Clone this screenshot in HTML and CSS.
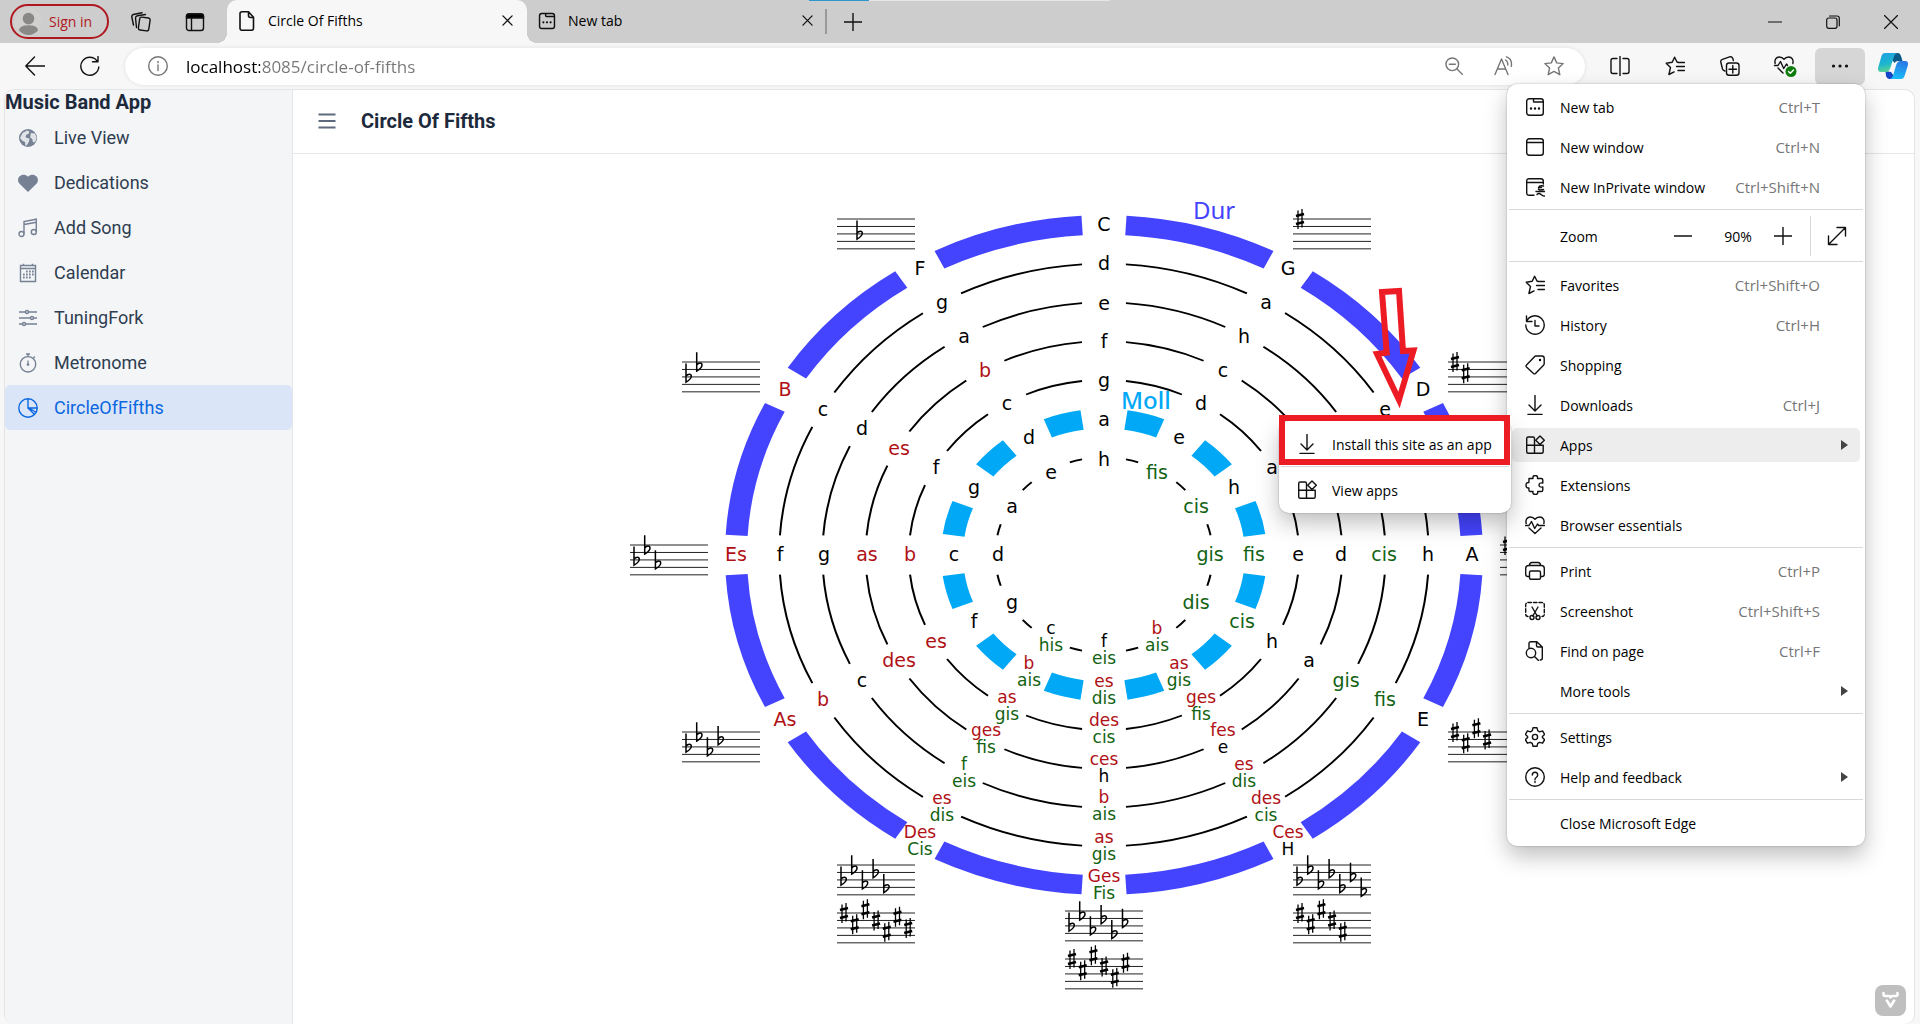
FILE: index.html
```html
<!DOCTYPE html>
<html lang="en">
<head>
<meta charset="utf-8">
<title>Circle Of Fifths</title>
<link rel="stylesheet" href="styles.css">
</head>
<body>
<svg class="sprite" aria-hidden="true">
  <symbol id="i-newtab" viewBox="0 0 20 20"><rect x="1.700" y="1.700" width="16.600" height="16.600" rx="2.500"/><path d="M8.500 2v2.200q0 .8.800.800H18"/><path class="dots" d="M6 11.500h.01M10 11.500h.01M14 11.500h.01"/></symbol>
  <symbol id="i-star-list" viewBox="0 0 20 20"><path d="M13 6.300 12 6 9.600 1.200 7.200 6.300l-6 .9 4.300 4.300-1.600 7 5.200-2.600"/><path d="M13 6.500h6.500M11.500 10.500h8M13 14.500h6.500"/></symbol>
  <symbol id="i-heart" viewBox="0 0 20 20"><path d="M1.200 8.500C.2 5 2.200 2 5.200 2 7.500 2 9 3 10 4.300 11 3 12.500 2 14.800 2c3 0 5 3 4 6.500"/><path d="M.500 10.500H4l2.500-4 3.200 7 2.800-4.500 1.200 1.500h5.800M4 13l6 5.500 6-5.500"/></symbol>
  <symbol id="i-apps" viewBox="0 0 20 20"><path d="M10 18.300H3.200q-1.500 0-1.500-1.500V3.500Q1.700 2 3.200 2H8q1.500 0 1.500 1.500v14.800M1.700 10.200h16.500v6.600q0 1.500-1.500 1.500H9.500"/><path d="m15 1 4.300 4.300L15 9.500l-4.300-4.200z"/></symbol>
  <symbol id="i-down" viewBox="0 0 20 20"><path d="M10 .500v15M4 10l6 6 6-6M3 19.500h14"/></symbol>
  <symbol id="i-close" viewBox="0 0 12 12"><path d="m1 1 10 10M11 1 1 11"/></symbol>
</svg>

<header class="browser">
  <div class="tabstrip">
    <button class="signin"><svg class="avatar" viewBox="0 0 28 28"><circle cx="14" cy="14" r="14" fill="#d2d0ce"/><circle cx="14" cy="11" r="6" fill="#8a8886"/><path d="M4 23q1-5 10-5t10 5q-4 5-10 5T4 23z" fill="#8a8886"/></svg>Sign in</button>
    <button class="strip-btn" aria-label="Workspaces"><svg class="ic ic-lg" viewBox="0 0 20 20"><rect x="8" y="5.500" width="10.500" height="13" rx="2" transform="rotate(8 13 12)"/><path d="M5.500 15.500 4.500 6q0-2 2-2.300l8-1.200M2.500 13 .8 5q-.2-2 1.500-2.500L11 .8"/></svg></button>
    <button class="strip-btn" aria-label="Vertical tabs"><svg class="ic ic-lg" viewBox="0 0 20 20"><rect x="1.500" y="2" width="17" height="16.500" rx="2.500"/><path d="M1.500 6V4.500Q1.500 2 4 2h12q2.500 0 2.500 2.500V6z" fill="#000"/><path d="M6.500 6v12"/></svg></button>
    <div class="tab tab-active"><svg class="ic tab-ic" viewBox="0 0 18 20"><path d="M4 .8h6.500l5 5.500v11q0 2-2 2H4q-2 0-2-2V2.800q0-2 2-2zM10.500 1v3.500q0 2 2 2h3"/></svg><span class="tab-title">Circle Of Fifths</span><button class="tab-close" aria-label="Close tab"><svg class="ic ic-x"><use href="#i-close"/></svg></button></div>
    <div class="tab tab-idle"><svg class="ic tab-ic"><use href="#i-newtab"/></svg><span class="tab-title">New tab</span><button class="tab-close" aria-label="Close tab"><svg class="ic ic-x"><use href="#i-close"/></svg></button></div>
    <button class="strip-btn" aria-label="New tab"><svg class="ic" viewBox="0 0 18 18"><path d="M9 0v18M0 9h18"/></svg></button>
    <div class="window-btns">
      <button aria-label="Minimize"><svg class="ic ic-win" viewBox="0 0 14 14"><path d="M.5 7h13"/></svg></button>
      <button aria-label="Restore"><svg class="ic ic-win" viewBox="0 0 14 14"><rect x=".7" y="3" width="10.300" height="10.300" rx="2"/><path d="M3.500 1H11q2.300 0 2.300 2.300v7.500"/></svg></button>
      <button aria-label="Close"><svg class="ic ic-win" viewBox="0 0 14 14"><path d="m.5.5 13 13M13.500.5l-13 13"/></svg></button>
    </div>
    <div class="top-edge"></div>
  </div>

  <div class="toolbar">
    <button class="tool" aria-label="Back"><svg class="ic ic-lg" viewBox="0 0 20 20"><path d="M20 10H.8M9.500 1 .8 10l8.700 9"/></svg></button>
    <button class="tool" aria-label="Refresh"><svg class="ic ic-lg" viewBox="0 0 20 20"><path d="M18.800 11A9 9 0 1 1 17 4.800M18 .500v5.200h-5.500"/></svg></button>
    <div class="address">
      <svg class="ic ic-lg ic-gray" viewBox="0 0 20 20"><circle cx="10" cy="10" r="9.300"/><path d="M10 9v5.500M10 5.500v1.300"/></svg>
      <input class="url" type="text" aria-label="Address" value="localhost:8085/circle-of-fifths">
      <button class="tool" aria-label="Zoom out"><svg class="ic ic-gray" viewBox="0 0 18 18"><circle cx="7.300" cy="7.300" r="6.300"/><path d="m12 12 5.500 5.500M4.300 7.300h6"/></svg></button>
      <button class="tool" aria-label="Read aloud"><svg class="ic ic-lg ic-gray" viewBox="0 0 20 20"><path d="M1 18.500 7.500 3 14 18.500M3.300 13h8.400M11.500 4q2.500 1.300 2.300 5M12.500.800q6 2 4.800 9.500" /></svg></button>
      <button class="tool" aria-label="Favorite"><svg class="ic ic-lg ic-gray" viewBox="0 0 20 20"><path d="m10 .900 2.700 6 6.500.700-4.800 4.400 1.400 6.700L10 15.400l-5.800 3.300 1.400-6.700L.8 7.600l6.500-.7z"/></svg></button>
    </div>
    <button class="tool" aria-label="Split screen"><svg class="ic ic-lg" viewBox="0 0 20 20"><path d="M10 0v20M7 2.500H3q-2 0-2 2v11q0 2 2 2h4M13 2.500h4q2 0 2 2v11q0 2-2 2h-4"/></svg></button>
    <button class="tool" aria-label="Favorites"><svg class="ic ic-lg"><use href="#i-star-list"/></svg></button>
    <button class="tool" aria-label="Collections"><svg class="ic ic-lg" viewBox="0 0 20 20"><rect x="6.500" y="7" width="12.500" height="12.300" rx="2.500"/><path d="M12.800 9.500v7.500M9 13.200h7.500M5 15Q3 14.500 2.500 13L.800 6Q.400 4 2.500 3.300l7-2.400q2.500-.8 3.300 1.600l.6 2"/></svg></button>
    <button class="tool" aria-label="Browser essentials"><svg class="ic ic-xl" viewBox="0 0 24 24"><g transform="translate(1 1)"><path d="M1.200 8.500C.2 5 2.200 2 5.200 2 7.500 2 9 3 10 4.300 11 3 12.500 2 14.800 2c3 0 5 3 4 6.500"/><path d="M.500 10.500H4l2.500-4 3.200 7 2.800-4.500 1 1.500M4 13l5 5"/></g><circle cx="18" cy="17.500" r="5.500" fill="#107c10" stroke="none"/><path d="m15.500 17.500 1.800 1.800 3.200-3.400" stroke="#fff"/></svg></button>
    <button class="tool tool-open" aria-label="Settings and more"><svg class="ic ic-lg" viewBox="0 0 20 20"><path class="dots-lg" d="M3.500 10h.01M10 10h.01M16.500 10h.01"/></svg></button>
    <button class="tool tool-copilot" aria-label="Copilot"><svg class="copilot" viewBox="0 0 30 28">
      <defs><linearGradient id="cg1" x1=".3" y1="0" x2=".5" y2="1"><stop offset="0" stop-color="#1fa3e0"/><stop offset=".55" stop-color="#1cb5d0"/><stop offset="1" stop-color="#5fd58c"/></linearGradient><linearGradient id="cg2" x1=".6" y1="0" x2=".3" y2="1"><stop offset="0" stop-color="#2a78e4"/><stop offset="1" stop-color="#18c0fa"/></linearGradient></defs>
      <path d="M16 1h4q2 0 3 3l1.500 5H20q-2.500 0-3.300 2L14 8z" fill="#0a5a88"/>
      <path d="M7.500 19 13 20l3 4-2 3h-3q-2 0-3-3z" fill="#1545c8"/>
      <path d="M7 1h13q-3 0-4 3.500l-3.500 11Q11 20 7.500 20H3q-4 0-2.700-5L3.500 4Q4.500 1 7 1z" fill="url(#cg1)"/>
      <path d="M23 27H11q3 0 4-3.500l3.200-10.500Q19.500 9 22.500 9H27q4 0 2.700 5L26.500 24q-1 3-3.500 3z" fill="url(#cg2)"/></svg></button>
  </div>
</header>

<div class="app">
  <aside class="sidebar">
    <h1 class="app-name">Music Band App</h1>
    <nav class="nav">
      <a href="#"><svg class="nav-ic" viewBox="0 0 20 20"><circle cx="10" cy="10" r="9" fill="currentColor"/><path d="M4.500 5 9 2.500l2.500 1-1 2.500-2 .5-1 2.500 1.500 1 2.500.5-.5 3L9 17l-1.500 1-.5-4-3-1.500L2 10zM13 5l4 .5 1.500 4-1 4-2.500 1-.8-3.500-2-1.500.3-2.500z" fill="#f3f5f7" opacity=".85"/></svg>Live View</a>
      <a href="#"><svg class="nav-ic" viewBox="0 0 20 20"><path d="M10 19 1.300 10.500C-3 5 4.500-1.500 10 3.800 15.500-1.500 23 5 18.700 10.500z" fill="currentColor"/></svg>Dedications</a>
      <a href="#"><svg class="nav-ic line" viewBox="0 0 20 20"><path d="M6 16V3.500L18.300 1.200V14M6 6.500l12.300-2.300"/><circle cx="3.500" cy="16" r="2.500"/><circle cx="15.800" cy="14" r="2.500"/></svg>Add Song</a>
      <a href="#"><svg class="nav-ic line" viewBox="0 0 20 20"><path d="M2.500 2.500h15v16h-15zM2.500 5.500h15M5.500.8v2M14.500.8v2"/><path d="M8 8.500h8M5 11.500h11M5 14.500h8" stroke-width="1.800" stroke-dasharray="1.700 1.300"/></svg>Calendar</a>
      <a href="#"><svg class="nav-ic line" viewBox="0 0 20 20"><path d="M1 4h6.500M10.500 4H19M1 10h11.500M15.500 10H19M1 16h3.500M7.500 16H19"/><circle cx="9" cy="4" r="1.500"/><circle cx="14" cy="10" r="1.500"/><circle cx="6" cy="16" r="1.500"/></svg>TuningFork</a>
      <a href="#"><svg class="nav-ic line" viewBox="0 0 20 20"><circle cx="10" cy="11.300" r="7.700"/><path d="M8 1h4M10 1v2.500M15.500 5l1.300-1.400"/><path d="M10 7.500v3.500" stroke-width="1.200"/><circle cx="10" cy="11.600" r="1.300" fill="currentColor" stroke="none"/></svg>Metronome</a>
      <a href="#" class="current" aria-current="page"><svg class="nav-ic line" viewBox="0 0 20 20"><circle cx="10" cy="10" r="9.200"/><path d="M10 1v9h9.200M10 10l6.500 6.500M10 10l4.500 2 3.500 2.500"/></svg>CircleOfFifths</a>
    </nav>
  </aside>
  <main class="main">
    <div class="view-head">
      <button class="toggle" aria-label="Menu toggle"><svg class="ic ic-lg" viewBox="0 0 20 20"><path d="M1.500 3.500h17M1.500 10h17M1.500 16.500h17"/></svg></button>
      <h2>Circle Of Fifths</h2>
    </div>
    <svg class="circle" viewBox="0 0 960 860" id="circle">
      <g class="rings" transform="translate(480 401) scale(1 .897)">
        <circle class="ring-major" r="368" pathLength="360" stroke-dasharray="23.14 6.86" stroke-dashoffset="-3.43"/>
        <circle r="324.800" pathLength="360" stroke-dasharray="22.23 7.77" stroke-dashoffset="-3.88"/>
        <circle r="281.600" pathLength="360" stroke-dasharray="21.04 8.96" stroke-dashoffset="-4.48"/>
        <circle r="238.400" pathLength="360" stroke-dasharray="19.41 10.59" stroke-dashoffset="-5.29"/>
        <circle r="195.200" pathLength="360" stroke-dasharray="17.06 12.94" stroke-dashoffset="-6.47"/>
        <circle class="ring-minor" r="152" pathLength="360" stroke-dasharray="13.36 16.64" stroke-dashoffset="-8.32"/>
        <circle r="108.800" pathLength="360" stroke-dasharray="6.67 23.33" stroke-dashoffset="-11.67"/>
      </g>
      <text class="mode major" x="569" y="65">Dur</text>
      <text class="mode minor" x="497" y="255">Moll</text>
    </svg>
  </main>
  <button class="dev-badge" aria-label="Vaadin development tools"><svg viewBox="0 0 31 31"><path d="M8.500 8v1.500q0 1.500 1.500 1.500h3.500q2 0 2 1.500 0-1.500 2-1.500H21q1.500 0 1.500-1.500V8M11.800 15.500l3.700 6 3.700-6" fill="none" stroke="#fff" stroke-width="2.600" stroke-linecap="round" stroke-linejoin="round"/></svg></button>
</div>

<div class="menu" role="menu">
  <button role="menuitem"><svg class="ic ic-lg"><use href="#i-newtab"/></svg><span>New tab</span><kbd>Ctrl+T</kbd></button>
  <button role="menuitem"><svg class="ic ic-lg" viewBox="0 0 20 20"><rect x="1.700" y="1.700" width="16.600" height="16.600" rx="2.500"/><path d="M1.700 5.500h16.600"/></svg><span>New window</span><kbd>Ctrl+N</kbd></button>
  <button role="menuitem"><svg class="ic ic-lg" viewBox="0 0 20 20"><path d="M9 18.300H4.200q-2.500 0-2.500-2.500V4.200q0-2.500 2.500-2.500h11.600q2.500 0 2.500 2.500V7M1.700 5.500h16.600M18.500 9q-4-1-5 1.500h3M18.500 12.500q-4 1-5-.5M11 14.500h9M12 17.500q2-2 4 0t4 1.500"/></svg><span>New InPrivate window</span><kbd>Ctrl+Shift+N</kbd></button>
  <hr>
  <div class="zoom-row"><span class="zoom-label">Zoom</span><button class="zoom-out" aria-label="Zoom out"><svg class="ic" viewBox="0 0 18 18"><path d="M0 9h18"/></svg></button><output>90%</output><button class="zoom-in" aria-label="Zoom in"><svg class="ic" viewBox="0 0 18 18"><path d="M9 0v18M0 9h18"/></svg></button><button class="full" aria-label="Full screen"><svg class="ic ic-lg" viewBox="0 0 20 20"><path d="M1.500 18.500 18.500 1.500M10 1.500h8.500V10M1.500 10v8.500H10"/></svg></button></div>
  <hr>
  <button role="menuitem"><svg class="ic ic-lg"><use href="#i-star-list"/></svg><span>Favorites</span><kbd>Ctrl+Shift+O</kbd></button>
  <button role="menuitem"><svg class="ic ic-lg" viewBox="0 0 20 20"><path d="M1.500 6.500A9.200 9.200 0 1 1 .800 10M1.500 1v5.500H7M10 5.500V11h4"/></svg><span>History</span><kbd>Ctrl+H</kbd></button>
  <button role="menuitem"><svg class="ic ic-lg" viewBox="0 0 20 20"><path d="M11 1h6q2.200 0 2.200 2.200V8.500q0 1-.7 1.700l-8 8.200q-1 1-2 0L1.500 12q-1-1 0-2l8-8.300Q10 1 11 1z"/><circle cx="15" cy="5" r="1.200" fill="#000" stroke="none"/></svg><span>Shopping</span></button>
  <button role="menuitem"><svg class="ic ic-lg"><use href="#i-down"/></svg><span>Downloads</span><kbd>Ctrl+J</kbd></button>
  <button role="menuitem" class="hover" aria-haspopup="true" aria-expanded="true"><svg class="ic ic-lg"><use href="#i-apps"/></svg><span>Apps</span><i class="arrow"></i></button>
  <button role="menuitem"><svg class="ic ic-lg" viewBox="0 0 20 20"><path d="M4 3.500h4q-.5-3 2.200-3t2.300 3h3.700q1.600 0 1.600 1.600V8q-3.800-.5-3.800 2t3.800 2v2.900q0 1.600-1.600 1.600h-3.500q.5 3-2.400 3t-2.300-3H5.500q-1.600 0-1.600-1.600V13Q1 13.300 1 10.200T3.900 7.500z"/></svg><span>Extensions</span></button>
  <button role="menuitem"><svg class="ic ic-lg"><use href="#i-heart"/></svg><span>Browser essentials</span></button>
  <hr>
  <button role="menuitem"><svg class="ic ic-lg" viewBox="0 0 20 20"><path d="M4 15.500H3q-2.300 0-2.300-2.300V7.500Q.7 4.500 3.700 4.500h12.600q3 0 3 3v5.700q0 2.300-2.300 2.300h-1M4.500 4.500q0-3 2.500-3h6q2.500 0 2.500 3"/><rect x="4.500" y="10" width="11" height="8.300" rx="1.500"/></svg><span>Print</span><kbd>Ctrl+P</kbd></button>
  <button role="menuitem"><svg class="ic ic-lg" viewBox="0 0 20 20"><path d="M3 15.500Q.7 15.500.7 13V4Q.7 1.500 3.200 1.500h13.600q2.500 0 2.500 2.500v9q0 2.500-2.300 2.500" stroke-dasharray="3.500 2"/><path d="m7 6 5.200 9M13 6l-5.200 9"/><circle cx="7" cy="16.500" r="2"/><circle cx="13" cy="16.500" r="2"/></svg><span>Screenshot</span><kbd>Ctrl+Shift+S</kbd></button>
  <button role="menuitem"><svg class="ic ic-lg" viewBox="0 0 20 20"><path d="M4 7V2.500Q4 .7 5.800.7h6L17.300 6v11q0 2-2 2M11.500 1v3.500Q11.500 6 13 6h4"/><circle cx="6" cy="12" r="4.700"/><path d="m9.500 15.500 4 4"/></svg><span>Find on page</span><kbd>Ctrl+F</kbd></button>
  <button role="menuitem" aria-haspopup="true"><svg class="ic ic-lg"></svg><span>More tools</span><i class="arrow"></i></button>
  <hr>
  <button role="menuitem"><svg class="ic ic-lg" viewBox="0 0 20 20"><path d="M8 .8h4l.7 2.900 1.900 1.100 3-.9 2 3.500-2.200 2.100v1.100l2.200 2.100-2 3.500-3-.9-1.900 1.100-.7 2.900H8l-.7-2.900-1.900-1.100-3 .9-2-3.500 2.200-2.100V9.500L.4 7.400l2-3.500 3 .9 1.900-1.100z"/><circle cx="10" cy="10" r="2.600"/></svg><span>Settings</span></button>
  <button role="menuitem" aria-haspopup="true"><svg class="ic ic-lg" viewBox="0 0 20 20"><circle cx="10" cy="10" r="9.300"/><path d="M7.300 8q0-2.800 2.700-2.800T12.700 8q0 1.500-1.500 2.500T10 12.700M10 14.500v1"/></svg><span>Help and feedback</span><i class="arrow"></i></button>
  <hr>
  <button role="menuitem"><svg class="ic ic-lg"></svg><span>Close Microsoft Edge</span></button>
</div>

<div class="submenu" role="menu">
  <button role="menuitem"><svg class="ic ic-lg"><use href="#i-down"/></svg><span>Install this site as an app</span></button>
  <hr>
  <button role="menuitem"><svg class="ic ic-lg"><use href="#i-apps"/></svg><span>View apps</span></button>
</div>
<div class="mark-box"></div>
<svg class="mark-arrow" viewBox="0 0 50 130"><path d="M12 10 29 9 33 69 43.500 68.500 29 118 7 72l9.700-1.300z"/></svg>
<script src="circle.js"></script>
</body>
</html>
```
FILE: styles.css
```css
* { box-sizing: border-box; }
body {
  margin: 0;
  min-height: 100vh;
  display: flex;
  flex-direction: column;
  background: #f7f7f7;
  color: #000;
  font-family: "Open Sans", "Noto Sans", sans-serif;
  font-size: 14px;
  overflow: hidden;
}
button {
  display: flex;
  align-items: center;
  justify-content: center;
  margin: 0;
  padding: 0;
  border: 0;
  background: none;
  color: inherit;
  font: inherit;
}
.sprite { position: absolute; width: 0; height: 0; }
.ic {
  width: 18px;
  height: 18px;
  flex: none;
  fill: none;
  stroke: #111;
  stroke-width: 1.4;
  stroke-linecap: round;
  stroke-linejoin: round;
}
.ic-lg { width: 20px; height: 20px; }
.ic-xl { width: 24px; height: 24px; }
.ic-x { width: 11px; height: 11px; }
.ic-win { width: 14px; height: 14px; stroke-width: 1.2; }
.ic-gray { stroke: #767676; }
.dots { stroke-width: 2.4; }
.dots-lg { stroke-width: 3.2; }

/* Tab strip */
.tabstrip {
  position: relative;
  display: flex;
  align-items: center;
  height: 43px;
  padding-left: 10px;
  background: #cdcdcd;
}
.signin {
  width: 99px;
  height: 35px;
  justify-content: flex-start;
  gap: 7px;
  padding-left: 3px;
  margin-right: 10px;
  border: 2px solid #b01820;
  border-radius: 18px;
  color: #b01820;
}
.avatar { width: 27px; height: 27px; }
.strip-btn { width: 44px; height: 36px; margin-right: 10px; }
.tab {
  position: relative;
  display: flex;
  align-items: center;
  gap: 12px;
  height: 43px;
  padding: 0 8px 2px 11px;
}
.tab-active {
  width: 300px;
  background: #f7f7f7;
  border-radius: 10px 10px 0 0;
}
.tab-active::before, .tab-active::after {
  content: "";
  position: absolute;
  bottom: 0;
  width: 10px;
  height: 10px;
}
.tab-active::before { left: -10px; background: radial-gradient(circle at 0 0, transparent 10px, #f7f7f7 10px); }
.tab-active::after { right: -10px; background: radial-gradient(circle at 100% 0, transparent 10px, #f7f7f7 10px); }
.tab-idle { width: 300px; margin-right: 4px; }
.tab-idle::after {
  content: "";
  position: absolute;
  right: 0;
  top: 9px;
  width: 2px;
  height: 25px;
  background: #999;
}
.tab-title { flex: 1; }
.tab-ic { width: 18px; height: 20px; stroke-width: 1.6; }
.tab-close { width: 24px; height: 24px; }
.window-btns { display: flex; margin-left: auto; }
.window-btns button { width: 58px; height: 43px; }
.top-edge {
  position: absolute;
  left: 809px;
  top: 0;
  width: 301px;
  height: 1px;
  background: linear-gradient(90deg, #2f96cc 60px, #e6e6e6 60px);
}

/* Toolbar */
.toolbar {
  display: flex;
  align-items: center;
  gap: 5px;
  height: 46px;
  padding: 0 4px 0 10px;
}
.tool { width: 50px; height: 37px; flex: none; border-radius: 6px; }
.tool-open { background: #d6d6d6; }
.tool-copilot { width: 46px; }
.copilot { width: 30px; height: 28px; }
.address {
  flex: 1;
  display: flex;
  align-items: center;
  height: 37px;
  margin: 0 5px;
  padding: 0 6px 0 23px;
  background: #fff;
  border-radius: 19px;
  box-shadow: 0 0 4px #0000001a;
}
.url {
  flex: 1;
  height: 30px;
  margin-left: 18px;
  padding: 0;
  border: 0;
  outline: 0;
  font: inherit;
  font-size: 17px;
  color: transparent;
  background: linear-gradient(90deg, #000 74px, #767676 74px);
  -webkit-background-clip: text;
  background-clip: text;
}

/* Application page */
.app {
  position: relative;
  flex: 1;
  display: flex;
  margin: 0 5px 0 4px;
  border: 1px solid #e4e4e4;
  border-bottom: 0;
  border-radius: 10px;
  background: #fff;
  overflow: hidden;
  font-family: Roboto, sans-serif;
  color: #1d2a3c;
}
.sidebar {
  width: 288px;
  flex: none;
  border-right: 1px solid #e2e5ea;
  background: #f3f5f7;
}
.app-name {
  margin: 0 0 1px;
  font-size: 20px;
  line-height: 24px;
  font-weight: 700;
}
.nav { display: flex; flex-direction: column; }
.nav a {
  display: flex;
  align-items: center;
  gap: 16px;
  height: 45px;
  padding-left: 13px;
  border-radius: 5px;
  color: #2f3d50;
  font-size: 18px;
  text-decoration: none;
}
.nav-ic { width: 20px; height: 20px; color: #768194; }
.line { fill: none; stroke: currentColor; stroke-width: 1.4; }
.nav .current { background: #dae6f8; color: #0b67e0; }
.current .nav-ic { color: inherit; }
.main { flex: 1; min-width: 0; }
.view-head {
  display: flex;
  align-items: center;
  gap: 24px;
  height: 64px;
  padding: 0 0 2px 24px;
  border-bottom: 1px solid #e4e6ea;
}
.view-head h2 { margin: 0; font-size: 20px; font-weight: 700; }
.toggle .ic { stroke: #5d6a7e; stroke-width: 2; stroke-linecap: butt; }
.circle {
  display: block;
  width: 960px;
  max-width: 100%;
  margin: 0 auto;
}
.rings { fill: none; stroke: #000; stroke-width: 2; }
.ring-major { stroke: #4444ff; stroke-width: 22; }
.ring-minor { stroke: #00a8f5; stroke-width: 22; }
.circle text { font-family: "DejaVu Sans", "Noto Sans", sans-serif; }
.note { font-size: 19px; text-anchor: middle; }
.pair { font-size: 17px; }
.natural { fill: #000; }
.flat { fill: #b01116; }
.sharp { fill: #126312; }
.circle .mode { font-family: "Noto Sans", sans-serif; font-size: 24px; }
.major { fill: #4444ff; }
.minor { fill: #00a8f5; font-weight: 500; }
.staff { stroke: #222; stroke-width: 1; }
.flat-sign { fill: none; stroke: #000; stroke-width: 1.5; }
.sharp-stem { stroke: #000; stroke-width: 1.3; }
.sharp-bar { stroke: #000; stroke-width: 2.6; }
.dev-badge {
  position: absolute;
  right: 8px;
  bottom: 8px;
  width: 31px;
  height: 31px;
  border-radius: 8px;
  background: #bfbfbf;
}

/* Browser menus */
.menu, .submenu {
  position: absolute;
  background: #fff;
  border-radius: 10px;
  box-shadow: 0 0 2px #0000004d, 0 10px 22px #00000040;
}
.menu {
  top: 84px;
  right: 55px;
  width: 358px;
  padding: 3px 2px;
}
.submenu {
  top: 421px;
  right: 409px;
  width: 232px;
  padding: 3px 2px;
}
.menu > button, .submenu > button {
  width: 100%;
  height: 40px;
  padding: 0 43px 0 16px;
  gap: 15px;
  justify-content: flex-start;
  text-align: left;
  white-space: nowrap;
}
.submenu > button { padding-right: 0; }
hr {
  height: 1px;
  margin: 2px 0 3px;
  border: 0;
  background: #d8d8d8;
}
kbd {
  margin-left: auto;
  font: inherit;
  font-size: 15px;
  color: #767676;
}
.menu > .hover {
  width: 348px;
  height: 34px;
  margin: 3px;
  padding: 0 40px 0 13px;
  background: #ededed;
  border-radius: 5px;
}
.arrow {
  margin-left: auto;
  margin-right: -28px;
  border: solid transparent;
  border-width: 5px 0 5px 7px;
  border-left-color: #444;
}
.zoom-row {
  display: flex;
  align-items: center;
  height: 46px;
}
.zoom-row button { height: 40px; flex: none; }
.zoom-label { width: 147px; padding-left: 51px; }
.zoom-row .zoom-out { width: 54px; }
.zoom-row output { width: 56px; text-align: center; }
.zoom-row .zoom-in { width: 34px; margin-right: 10px; }
.zoom-row .full { width: 53px; border-left: 1px solid #d8d8d8; }

/* Hand-drawn marks over the menus */
.mark-box {
  position: absolute;
  top: 415px;
  right: 410px;
  width: 231px;
  height: 50px;
  border: 6px solid #ed1c24;
}
.mark-arrow {
  position: absolute;
  top: 282px;
  right: 500px;
  width: 50px;
  height: 130px;
  fill: none;
  stroke: #ed1c24;
  stroke-width: 6;
}
```
FILE: circle.js
```js
const svg = document.getElementById('circle');
const CX = 480, CY = 401, RATIO = 0.897;
const RADII = [368, 324, 280, 237, 194, 150, 106];

// Notes per key, outer ring first; "x/y" are enharmonic pairs
const KEYS = [
  'C d e f g a h',
  'G a h c d e fis',
  'D e - - a h cis',
  'A h cis d e fis gis',
  'E fis gis a h cis dis',
  'Ces/H des/cis es/dis fes/e ges/fis as/gis b/ais',
  'Ges/Fis as/gis b/ais ces/h des/cis es/dis f/eis',
  'Des/Cis es/dis f*/eis ges/fis as/gis b/ais c/his',
  'As b c des es f g',
  'Es f g as b c d',
  'B c d es f g a',
  'F g a b c d e'
];

function add(tag, attrs, text) {
  const el = document.createElementNS('http://www.w3.org/2000/svg', tag);
  for (const k in attrs) el.setAttribute(k, attrs[k]);
  if (text) el.textContent = text;
  svg.append(el);
}

function kind(note) {
  const n = note.toLowerCase();
  if (n.endsWith('is') || n.endsWith('*')) return 'sharp';
  return n === 'b' || (n.endsWith('s') && n.length > 1) ? 'flat' : 'natural';
}

KEYS.forEach((row, i) => {
  const a = i * Math.PI / 6;
  row.split(' ').forEach((cell, ring) => {
    if (cell === '-') return;
    // the minor-ring note of E sits further out, clear of its arc
    const r = i === 4 && ring === 5 ? RADII[ring] + 9 : RADII[ring];
    const x = Math.round(CX + r * Math.sin(a));
    const y = Math.round(CY - RADII[ring] * RATIO * Math.cos(a));
    const notes = cell.split('/');
    notes.forEach((n, k) => {
      const dy = notes.length === 1 ? 6 : k ? 14 : -3;
      add('text', { x, y: y + dy, class: `note ${notes.length > 1 ? 'pair ' : ''}${kind(n)}` }, n.replace('*', ''));
    });
  });
});

const STEP = 3.73;
const FLATS = [4, 1, 5, 2, 6, 3, 7];
const SHARPS = [0, 3, -1, 2, 5, 1, 4];

function staff(x, y, flats, sharps, indent = 0) {
  for (let l = 0; l < 5; l++) add('line', { class: 'staff', x1: x, x2: x + 78, y1: y + l * 2 * STEP, y2: y + l * 2 * STEP });
  FLATS.slice(0, flats).forEach((s, i) => {
    const t = `translate(${x + 4 + indent + i * 10.7} ${y + s * STEP})`;
    add('path', { class: 'flat-sign', transform: t, d: 'M0-13.500V5.300C3 3.500 5.400 1 5.300-.8 5.200-3.300 2-3.200 0-.8' });
  });
  SHARPS.slice(0, sharps).forEach((s, i) => {
    const t = `translate(${x + 7 + i * 10.7} ${y + s * STEP})`;
    add('path', { class: 'sharp-stem', transform: t, d: 'M-2-8.500V10M2-10V8.500' });
    add('path', { class: 'sharp-bar', transform: t, d: 'M-4-3l8-2M-4 5l8-2' });
  });
}

staff(669, 65, 0, 1);
staff(824, 208, 0, 2);
staff(876, 391, 0, 3);
staff(824, 578, 0, 4);
staff(669, 711, 7, 0);
staff(669, 759, 0, 5);
staff(441, 757, 6, 0);
staff(441, 805, 0, 6);
staff(213, 711, 5, 0);
staff(213, 759, 0, 7);
staff(58, 578, 4, 0);
staff(6, 391, 3, 0);
staff(58, 208, 2, 0);
staff(213, 65, 1, 0, 16);
```
